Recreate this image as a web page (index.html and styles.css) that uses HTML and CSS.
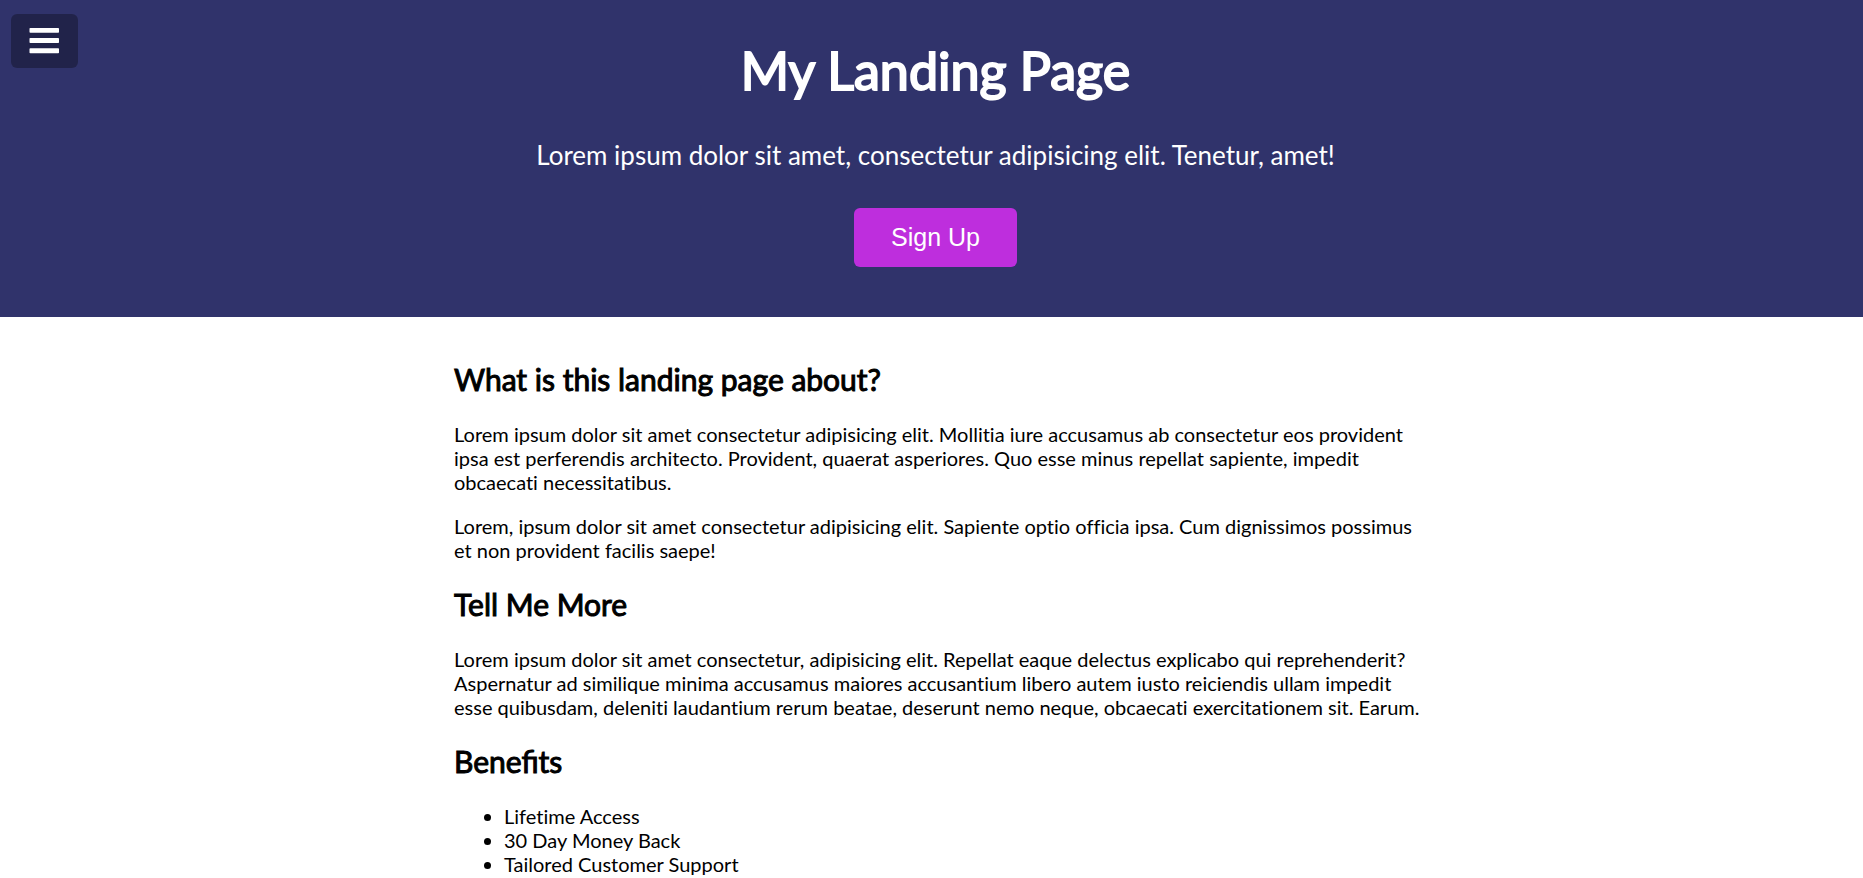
FILE: index.html
```html
<!DOCTYPE html>
<html lang="en">
<head>
<meta charset="utf-8">
<meta name="viewport" content="width=device-width, initial-scale=1">
<title>My Landing Page</title>
<link rel="stylesheet" href="styles.css">
</head>
<body>
<header class="hero">
  <button class="toggle" type="button" aria-label="Open menu">
    <svg class="toggle-icon" viewBox="0 0 30 26" aria-hidden="true">
      <rect x=".5" width="29.5" height="4.8" rx=".8"/>
      <rect x=".5" y="10" width="29.5" height="5" rx=".8"/>
      <rect x=".5" y="20.3" width="29.5" height="5" rx=".8"/>
    </svg>
  </button>
  <h1 class="hero-title">My Landing Page</h1>
  <p class="hero-text">Lorem ipsum dolor sit amet, consectetur adipisicing elit. Tenetur, amet!</p>
  <button class="cta" type="button">Sign Up</button>
</header>
<main class="container">
  <h2 class="heading">What is this landing page about?</h2>
  <p class="text">Lorem ipsum dolor sit amet consectetur adipisicing elit. Mollitia iure accusamus ab consectetur eos provident ipsa est perferendis architecto. Provident, quaerat asperiores. Quo esse minus repellat sapiente, impedit obcaecati necessitatibus.</p>
  <p class="text">Lorem, ipsum dolor sit amet consectetur adipisicing elit. Sapiente optio officia ipsa. Cum dignissimos possimus et non provident facilis saepe!</p>
  <h2 class="heading">Tell Me More</h2>
  <p class="text">Lorem ipsum dolor sit amet consectetur, adipisicing elit. Repellat eaque delectus explicabo qui reprehenderit? Aspernatur ad similique minima accusamus maiores accusantium libero autem iusto reiciendis ullam impedit esse quibusdam, deleniti laudantium rerum beatae, deserunt nemo neque, obcaecati exercitationem sit. Earum.</p>
  <h2 class="heading">Benefits</h2>
  <ul class="benefits">
    <li>Lifetime Access</li>
    <li>30 Day Money Back</li>
    <li>Tailored Customer Support</li>
  </ul>
</main>
</body>
</html>
```
FILE: styles.css
```css
* { box-sizing: border-box; }

body {
  margin: 0;
  background: #fff;
  color: #000;
  font-family: Lato, "Liberation Sans", sans-serif;
  font-size: 20px;
  line-height: 24px;
}

.hero {
  position: relative;
  display: flex;
  flex-direction: column;
  align-items: center;
  padding: 36px 0 50px 8px;
  background: #30336b;
  color: #fff;
  text-align: center;
}

.toggle {
  position: absolute;
  top: 14px;
  left: 11px;
  display: flex;
  padding: 14px 19px 14px 18px;
  border: 0;
  border-radius: 6px;
  background: rgba(0, 0, 0, 0.3);
  cursor: pointer;
}

.toggle-icon {
  width: 30px;
  height: 26px;
  fill: #fff;
}

.hero-title {
  margin: 0;
  font-size: 52px;
  font-weight: 400;
  line-height: 68px;
  -webkit-text-stroke: 2px currentColor;
}

.hero-text {
  margin: 34px 0 36px;
  font-size: 26px;
  line-height: 34px;
}

.cta {
  padding: 15px 37px;
  border: 0;
  border-radius: 6px;
  background: #be2edd;
  color: #fff;
  font-family: "Liberation Sans", Arial, sans-serif;
  font-size: 25px;
  line-height: 29px;
  cursor: pointer;
}

.container {
  max-width: 995px;
  margin: 0 auto;
  padding: 44px 0 0 20px;
}

.heading {
  margin: 0 0 25px;
  font-size: 30px;
  font-weight: 400;
  line-height: 36px;
  -webkit-text-stroke: 1px currentColor;
}

.text {
  margin: 0 0 20px;
  font-variant-ligatures: none;
}

.text + .heading { margin-top: 24px; }

.benefits {
  margin: 0;
  padding-left: 50px;
  font-variant-ligatures: none;
}
```
